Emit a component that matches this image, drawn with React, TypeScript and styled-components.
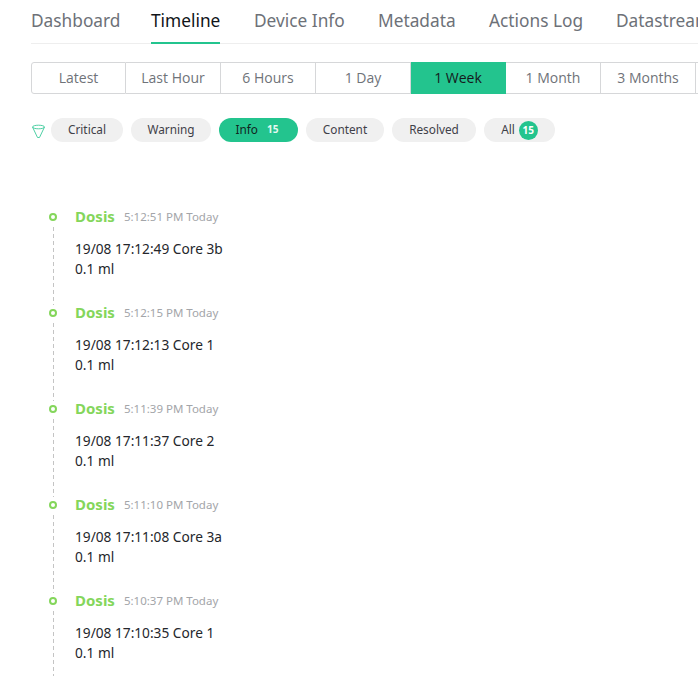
import { FC } from 'react'
import styled, { createGlobalStyle } from 'styled-components'

const GlobalStyle = createGlobalStyle`
    html, body {
        margin: 0;
        padding: 0;
        background: #fff;
        overflow: hidden;
    }
    body {
        font-family: "Lato", "Liberation Sans", sans-serif;
    }
`

const Page = styled.div`
    width: 698px;
    height: 676px;
    padding-left: 31px;
    box-sizing: border-box;
    overflow: hidden;
`

const Tabs = styled.div`
    display: grid;
    grid-template-columns: 120px 103px 124px 111px 127px auto;
    width: 700px;
    height: 44px;
    box-sizing: border-box;
    border-bottom: 1px solid #eeeeee;
    white-space: nowrap;
`

const Tab = styled.div<{ $active?: boolean }>`
    justify-self: start;
    height: 44px;
    box-sizing: border-box;
    padding-top: 8px;
    font-family: "Noto Sans", sans-serif;
    font-size: 17.3px;
    line-height: 25px;
    color: ${p => (p.$active ? '#111419' : '#6d7178')};
    border-bottom: ${p => (p.$active ? '2px solid #23c48e' : 'none')};
`

const RangeGroup = styled.div`
    display: flex;
    width: 700px;
    margin-top: 18px;
`

const RangeButton = styled.div<{ $active?: boolean; $first?: boolean }>`
    flex: 0 0 95px;
    height: 32px;
    box-sizing: border-box;
    padding-bottom: 2px;
    display: flex;
    align-items: center;
    justify-content: center;
    font-family: "Open Sans", sans-serif;
    font-size: 14px;
    color: ${p => (p.$active ? '#15191c' : '#6f7379')};
    background: ${p => (p.$active ? '#23c48e' : '#fff')};
    border: 1px solid ${p => (p.$active ? '#23c48e' : '#d6d7d9')};
    border-left-width: ${p => (p.$first ? '1px' : '0')};
    border-radius: ${p => (p.$first ? '3px 0 0 3px' : '0')};
`

const FilterRow = styled.div`
    display: flex;
    align-items: center;
    gap: 8px;
    margin-top: 24px;
    height: 24px;
`

const FilterIcon = styled.svg`
    width: 15px;
    height: 15px;
    margin: 3px -3px 0 0;
    flex: none;
`

const Pill = styled.div<{ $width: number; $active?: boolean }>`
    width: ${p => p.$width}px;
    height: 24px;
    box-sizing: border-box;
    padding-bottom: 2px;
    display: flex;
    align-items: center;
    justify-content: center;
    gap: 9px;
    border-radius: 12px;
    font-family: "Noto Sans", sans-serif;
    font-size: 11.8px;
    color: ${p => (p.$active ? '#12261f' : '#3f4048')};
    background: ${p => (p.$active ? '#23c48e' : '#f0f0f0')};
`

const PillCount = styled.span`
    font-size: 10px;
    font-weight: 700;
    color: #e6f8f1;
    margin-right: 3px;
`

const CountBadge = styled.span`
    width: 19px;
    height: 19px;
    margin-left: -5px;
    margin-top: 2px;
    border-radius: 50%;
    background: #23c48e;
    color: #fff;
    font-size: 10px;
    font-weight: 700;
    display: flex;
    align-items: center;
    justify-content: center;
`

const Timeline = styled.div`
    margin-top: 63px;
    display: flex;
    flex-direction: column;
`

const Entry = styled.div`
    height: 96px;
    display: grid;
    grid-template-columns: 44px 1fr;
`

const Rail = styled.div`
    display: flex;
    flex-direction: column;
    width: 44px;
    padding-top: 8px;
`

const Dot = styled.div`
    width: 8px;
    height: 8px;
    box-sizing: border-box;
    border: 2px solid #84d65b;
    border-radius: 50%;
    flex: none;
    margin-left: 18px;
`

const Dash = styled.div`
    flex: 1;
    width: 1px;
    margin-top: 6px;
    margin-bottom: -4px;
    margin-left: 22px;
    background: repeating-linear-gradient(#c4c4c4 0 4px, transparent 4px 7px);
`

const Heading = styled.div`
    display: flex;
    align-items: center;
    gap: 9px;
    height: 23px;
    line-height: 23px;
`

const Title = styled.span`
    font-family: "Noto Sans", sans-serif;
    font-size: 15px;
    font-weight: 700;
    color: #84d65b;
`

const Stamp = styled.span`
    font-family: "Noto Sans", sans-serif;
    font-size: 11.5px;
    color: #a3a5a9;
`

const Body = styled.div`
    margin-top: 11px;
    font-family: "Noto Sans", sans-serif;
    font-size: 13.7px;
    line-height: 20px;
    color: #24262b;
`

const ranges = ['Latest', 'Last Hour', '6 Hours', '1 Day', '1 Week', '1 Month', '3 Months', '']
const tabs = ['Dashboard', 'Timeline', 'Device Info', 'Metadata', 'Actions Log', 'Datastreams']
const entries = [
    { stamp: '5:12:51 PM Today', text: '19/08 17:12:49 Core 3b' },
    { stamp: '5:12:15 PM Today', text: '19/08 17:12:13 Core 1' },
    { stamp: '5:11:39 PM Today', text: '19/08 17:11:37 Core 2' },
    { stamp: '5:11:10 PM Today', text: '19/08 17:11:08 Core 3a' },
    { stamp: '5:10:37 PM Today', text: '19/08 17:10:35 Core 1' },
]

const App: FC = () => {
    return (
        <Page>
            <GlobalStyle />
            <Tabs>
                {tabs.map(tab => (
                    <Tab key={tab} $active={tab === 'Timeline'}>{tab}</Tab>
                ))}
            </Tabs>
            <RangeGroup>
                {ranges.map((range, index) => (
                    <RangeButton key={index} $first={index === 0} $active={range === '1 Week'}>{range}</RangeButton>
                ))}
            </RangeGroup>
            <FilterRow>
                <FilterIcon viewBox="0 0 15 15" fill="none" stroke="#4fd0a5" strokeWidth="1">
                    <ellipse cx="7.5" cy="3" rx="6" ry="1.8" />
                    <path d="M1.5 3 L6.5 13.5 H8.5 L13.5 3" />
                </FilterIcon>
                <Pill $width={72}>Critical</Pill>
                <Pill $width={80}>Warning</Pill>
                <Pill $width={79} $active>Info <PillCount>15</PillCount></Pill>
                <Pill $width={78}>Content</Pill>
                <Pill $width={84}>Resolved</Pill>
                <Pill $width={71}>All <CountBadge>15</CountBadge></Pill>
            </FilterRow>
            <Timeline>
                {entries.map(entry => (
                    <Entry key={entry.stamp}>
                        <Rail>
                            <Dot />
                            <Dash />
                        </Rail>
                        <div>
                            <Heading>
                                <Title>Dosis</Title>
                                <Stamp>{entry.stamp}</Stamp>
                            </Heading>
                            <Body>
                                {entry.text}
                                <br />
                                0.1 ml
                            </Body>
                        </div>
                    </Entry>
                ))}
            </Timeline>
        </Page>
    )
}

export default App
